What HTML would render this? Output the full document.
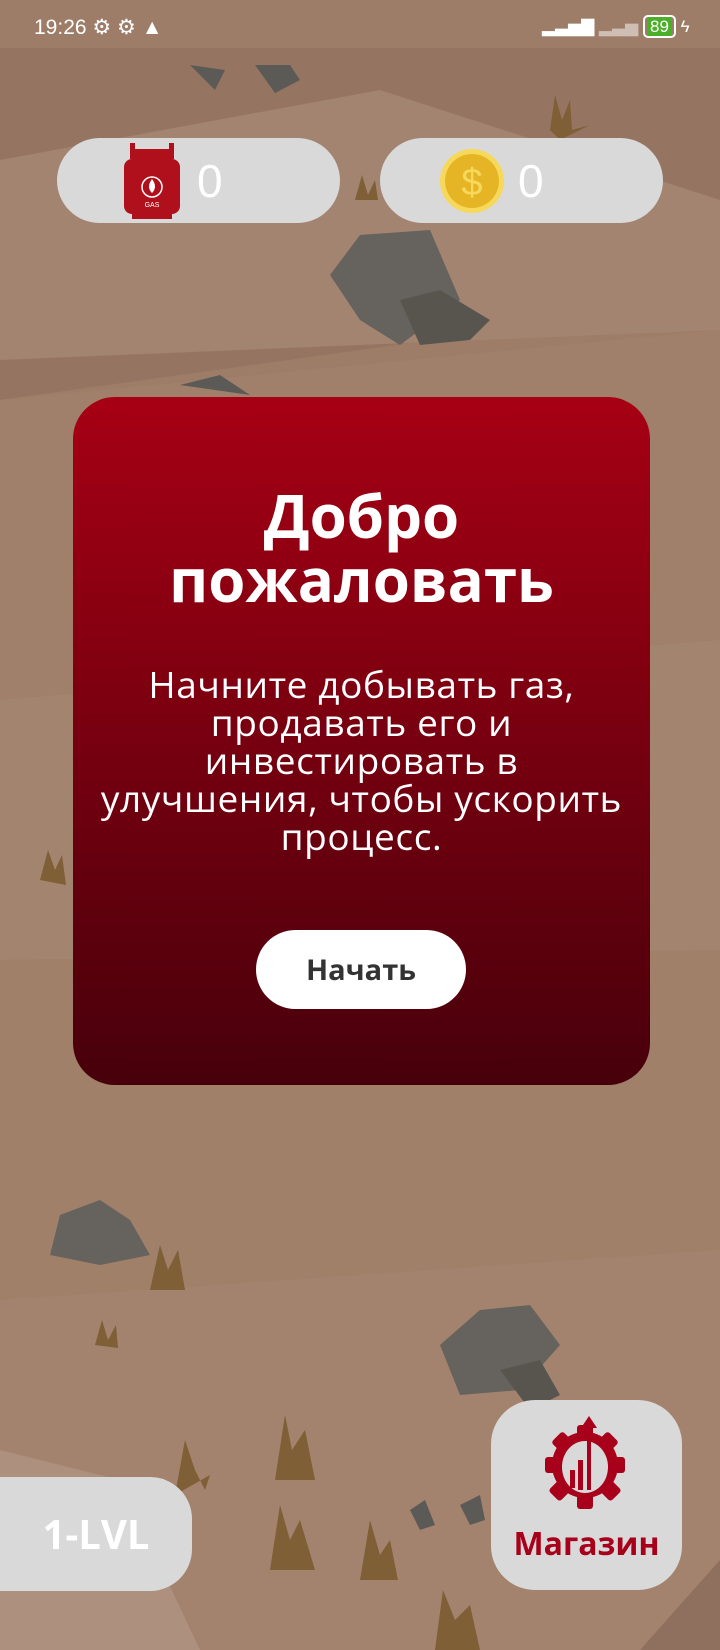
<!DOCTYPE html>
<html><head><meta charset="utf-8"><style>
body{margin:0;width:720px;height:1650px;overflow:hidden;position:relative;background:#9e7d68;font-family:"Open Sans","Liberation Sans",sans-serif}
.abs{position:absolute}
.pill{position:absolute;top:138px;height:85px;width:283px;background:#d9d9d9;border-radius:43px}
.pill .n{position:absolute;top:16px;font-size:46px;color:#fff;font-family:"Liberation Sans",sans-serif}
#card{position:absolute;left:73px;top:397px;width:577px;height:688px;border-radius:42px;background:linear-gradient(#a70014,#47000b);color:#fff;text-align:center}
</style></head><body>
<svg class="abs" style="left:0;top:0" width="720" height="1650">
<polygon points="0,48 720,48 720,300 0,400" fill="#967462"/>
<polygon points="0,160 380,90 720,200 720,330 0,360" fill="#a38470"/>
<polygon points="0,400 720,330 720,650 0,700" fill="#a0806b"/>
<polygon points="0,700 720,640 720,950 0,960" fill="#a3846f"/>
<polygon points="0,960 720,950 720,1250 0,1300" fill="#a08069"/>
<polygon points="0,1300 720,1250 720,1650 0,1650" fill="#a3836d"/>
<polygon points="0,1450 120,1480 200,1650 0,1650" fill="#ae907e"/>
<polygon points="640,1650 720,1560 720,1650" fill="#8f6f5e"/>
<polygon points="190,65 215,90 225,70" fill="#5c5a56"/>
<polygon points="255,65 290,65 300,80 275,93" fill="#5c5a56"/>
<polygon points="330,275 360,235 430,230 460,300 400,345 360,320" fill="#66625d"/>
<polygon points="400,300 440,290 490,320 470,340 420,345" fill="#58554f"/>
<polygon points="180,385 220,375 250,395" fill="#5c5a56"/>
<polygon points="60,1215 100,1200 130,1220 150,1255 100,1265 50,1255" fill="#66625d"/>
<polygon points="440,1345 480,1310 530,1305 560,1345 520,1390 460,1395" fill="#66625d"/>
<polygon points="500,1370 540,1360 560,1395 530,1410" fill="#58554f"/>
<polygon points="410,1510 425,1500 435,1525 420,1530" fill="#5c5a56"/>
<polygon points="460,1505 480,1495 485,1520 470,1525" fill="#5c5a56"/>
<g fill="#7f5f36">
<polygon points="550,130 555,95 562,120 570,100 572,130 590,125 560,140"/>
<polygon points="355,200 362,175 368,195 375,180 378,200"/>
<polygon points="40,880 48,850 55,870 62,855 66,885"/>
<polygon points="150,1290 160,1245 168,1270 178,1250 185,1290"/>
<polygon points="95,1345 102,1320 108,1340 116,1325 118,1348"/>
<polygon points="175,1495 185,1440 195,1470 205,1490 210,1475"/>
<polygon points="275,1480 285,1415 292,1450 305,1430 315,1480"/>
<polygon points="270,1570 280,1505 290,1540 300,1520 315,1570"/>
<polygon points="360,1580 370,1520 380,1555 390,1540 398,1580"/>
<polygon points="435,1650 443,1590 455,1620 470,1605 480,1650"/>
</g>
</svg>
<div class="abs" style="left:34px;top:15px;color:#fff;font-size:21px;font-family:'Liberation Sans',sans-serif">19:26 ⚙ ⚙ ▲</div>
<div class="abs" style="left:542px;top:17px;color:#fff;font-size:17px;font-family:'Liberation Sans',sans-serif">▂▃▅▇ <span style="opacity:.5">▂▃▅</span> <span style="border:2px solid #fff;border-radius:5px;padding:0 3px;"><span style="background:#4caf2a;padding:0 2px">89</span></span> ϟ</div>
<div class="pill" style="left:57px">
<svg class="abs" style="left:65px;top:3px" width="60" height="80" viewBox="0 0 60 80"><rect x="8" y="2" width="5" height="10" fill="#b0101c"/><rect x="47" y="2" width="5" height="10" fill="#b0101c"/><rect x="8" y="8" width="44" height="10" fill="#b0101c"/><rect x="2" y="18" width="56" height="55" rx="8" fill="#b0101c"/><rect x="10" y="72" width="40" height="6" fill="#b0101c"/><circle cx="30" cy="46" r="10" fill="none" stroke="#fff" stroke-width="1.5"/><path d="M30 38 q-6 8 0 14 q6 -6 0 -14" fill="#fff"/><text x="30" y="66" font-size="7" fill="#fff" text-anchor="middle" font-family="Liberation Sans">GAS</text></svg>
<div class="n" style="left:140px">0</div></div>
<div class="pill" style="left:380px">
<svg class="abs" style="left:59px;top:9px" width="66" height="68"><circle cx="33" cy="34" r="32" fill="#f6d95a"/><circle cx="33" cy="34" r="27" fill="#e6b526"/><text x="33" y="48" font-size="38" fill="#f6d95a" text-anchor="middle" font-family="Liberation Sans">$</text></svg>
<div class="n" style="left:138px">0</div></div>
<div id="card">
<div style="position:absolute;top:86px;width:100%;font-size:60px;font-weight:bold;line-height:64px">Добро<br>пожаловать</div>
<div style="position:absolute;top:268px;left:-20px;right:-20px;font-size:37px;letter-spacing:0.6px;line-height:38px">Начните добывать газ,<br>продавать его и<br>инвестировать в<br>улучшения, чтобы ускорить<br>процесс.</div>
<div style="position:absolute;left:183px;top:533px;width:210px;height:79px;border-radius:40px;background:#fff;color:#333;font-weight:bold;font-size:29px;line-height:79px">Начать</div>
</div>
<div class="abs" style="left:0;top:1477px;width:192px;height:114px;border-radius:0 42px 42px 0;background:#d9d9d9;color:#fff;font-size:40px;font-weight:bold;line-height:114px;text-align:center">1-LVL</div>
<div class="abs" style="left:491px;top:1400px;width:191px;height:190px;border-radius:44px;background:#d9d9d9;text-align:center">
<svg class="abs" style="left:52px;top:10px" width="84" height="110" viewBox="0 0 84 110"><g fill="#a8001a"><circle cx="42" cy="55" r="33"/><rect x="34" y="15" width="16" height="84" rx="3"/><rect x="2" y="47" width="80" height="16" rx="3"/><rect x="34" y="15" width="16" height="84" rx="3" transform="rotate(45 42 55)"/><rect x="34" y="15" width="16" height="84" rx="3" transform="rotate(-45 42 55)"/></g><ellipse cx="42" cy="57" rx="23" ry="26" fill="#d9d9d9"/><g fill="#a8001a"><rect x="27" y="60" width="5" height="18"/><rect x="35" y="50" width="5" height="30"/><rect x="44" y="12" width="4" height="68"/><polygon points="38,18 46,6 54,18"/></g></svg>
<div class="abs" style="left:0;right:0;top:122px;color:#a8001a;font-weight:bold;font-size:32px">Магазин</div></div>
</body></html>
